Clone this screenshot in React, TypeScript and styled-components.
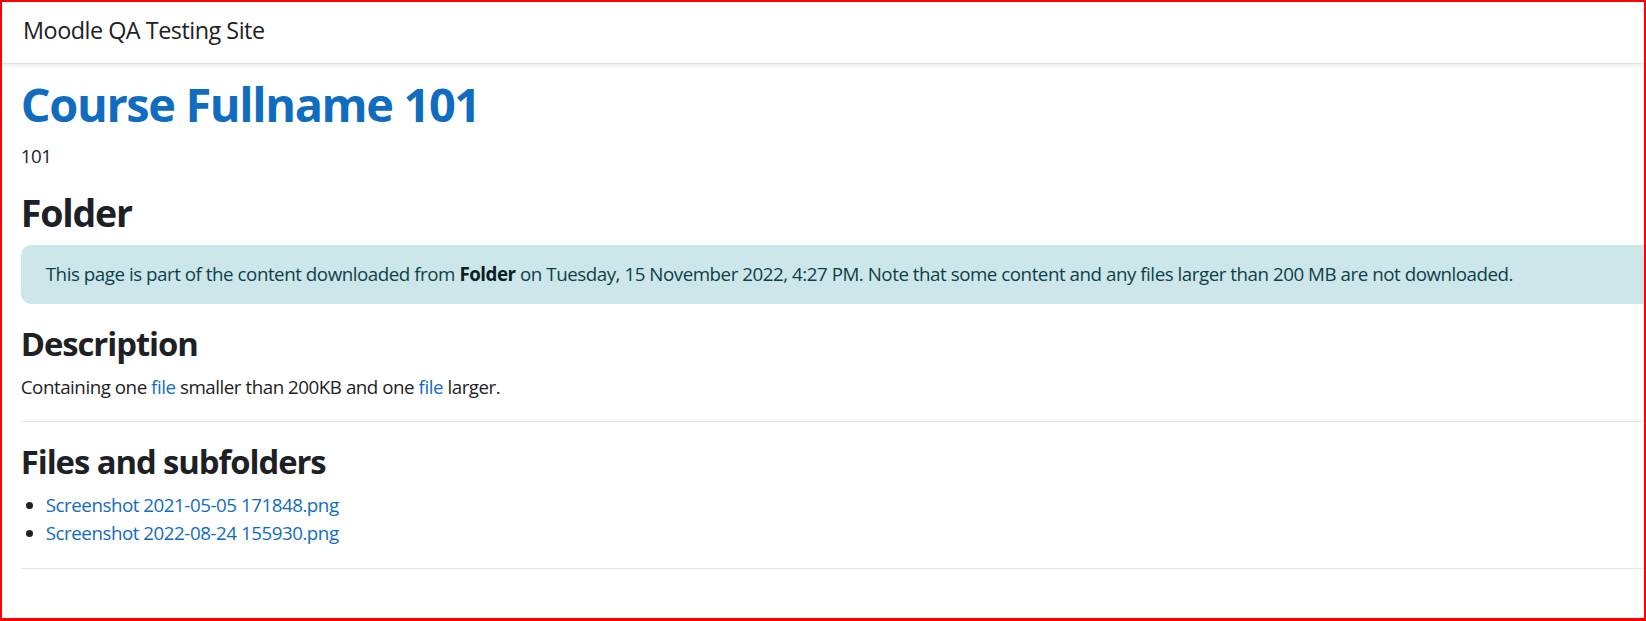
import React from "react";
import styled, { createGlobalStyle } from "styled-components";

const GlobalStyle = createGlobalStyle`
  html, body {
    margin: 0;
    padding: 0;
    background: #ffffff;
  }
  body {
    font-family: "Open Sans", "Noto Sans", sans-serif;
    font-size: 18.75px;
    line-height: 1.5;
    letter-spacing: -0.025em;
    color: #1d2125;
  }
`;

const Frame = styled.div`
  box-sizing: border-box;
  width: 1646px;
  height: 621px;
  border: 2px solid #ff0000;
  border-bottom-width: 3px;
  overflow: hidden;
  background: #ffffff;
`;

const Navbar = styled.header`
  box-sizing: border-box;
  height: 62px;
  display: flex;
  align-items: center;
  padding: 0 21px 4px;
  background: #ffffff;
  border-bottom: 1px solid #dee2e6;
  box-shadow: 0 2px 5px rgba(0, 0, 0, 0.08);
  position: relative;
`;

const Brand = styled.span`
  font-size: 23.4px;
  line-height: 1.5;
  letter-spacing: -0.021em;
  color: #1d2125;
`;

const Page = styled.main`
  padding: 12px 0 0 18.75px;
`;

const Content = styled.div`
  width: calc(100% + 40px);
`;

const Title = styled.h1`
  margin: 0 0 10px;
  font-size: 46.9px;
  line-height: 1.2;
  font-weight: 700;
  letter-spacing: -0.029em;
  color: #0f6cbf;
`;

const Heading = styled.h2<{ $size: number }>`
  margin: 0 0 10px;
  font-size: ${(p) => p.$size}px;
  line-height: 1.2;
  font-weight: 700;
  letter-spacing: -0.032em;
  color: #1d2125;
`;

const Text = styled.p`
  margin: 0 0 20px;
`;

const Info = styled.div`
  margin: 0 0 20px;
  padding: 15px 25px;
  background: #cce6ea;
  border-radius: 10px;
  color: #0e3f48;

  b {
    color: #0a1f24;
  }
`;

const Link = styled.a`
  color: #0f6cbf;
  text-decoration: none;
`;

const Rule = styled.hr`
  margin: 20px 0;
  border: 0;
  border-top: 1.25px solid rgba(0, 0, 0, 0.1);
`;

const FileList = styled.ul`
  margin: 0 0 20px;
  padding-left: 25px;

  li::marker {
    color: #1d2125;
  }
`;

const files = [
  "Screenshot 2021-05-05 171848.png",
  "Screenshot 2022-08-24 155930.png",
];

export default function App() {
  return (
    <>
      <GlobalStyle />
      <Frame>
        <Navbar>
          <Brand>Moodle QA Testing Site</Brand>
        </Navbar>
        <Page>
          <Content>
            <Title>Course Fullname 101</Title>
            <Text>101</Text>
            <Heading $size={37.5}>Folder</Heading>
            <Info>
              This page is part of the content downloaded from <b>Folder</b> on Tuesday, 15 November 2022, 4:27 PM. Note that some content and any files larger than 200 MB are not downloaded.
            </Info>
            <Heading as="h3" $size={32.8}>Description</Heading>
            <Text>
              Containing one <Link href="#">file</Link> smaller than 200KB and one <Link href="#">file</Link> larger.
            </Text>
            <Rule />
            <Heading as="h3" $size={32.8}>Files and subfolders</Heading>
            <FileList>
              {files.map((f) => (
                <li key={f}>
                  <Link href="#">{f}</Link>
                </li>
              ))}
            </FileList>
            <Rule />
          </Content>
        </Page>
      </Frame>
    </>
  );
}
